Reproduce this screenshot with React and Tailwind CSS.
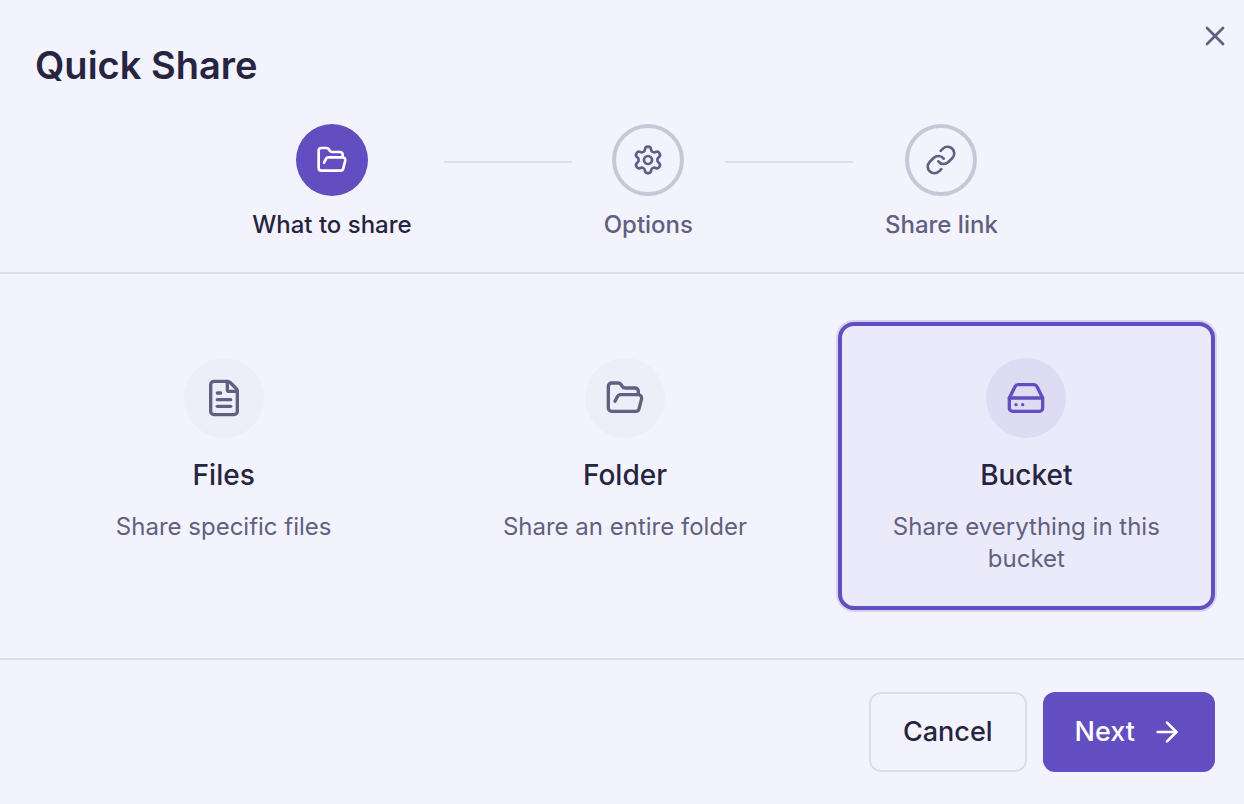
import { Fragment, useState } from "react";
import { ArrowRight, FileText, FolderOpen, HardDrive, Link, Settings, X } from "lucide-react";

const steps = [
  { label: "What to share", icon: FolderOpen },
  { label: "Options", icon: Settings },
  { label: "Share link", icon: Link },
];

const targets = [
  { id: "files", title: "Files", text: "Share specific files", icon: FileText },
  { id: "folder", title: "Folder", text: "Share an entire folder", icon: FolderOpen },
  { id: "bucket", title: "Bucket", text: "Share everything in this bucket", icon: HardDrive },
];

function Step({ label, icon: Icon, active }) {
  return (
    <li className="flex flex-col items-center gap-[13px]" aria-current={active ? "step" : undefined}>
      <div
        className={
          active
            ? "flex size-18 items-center justify-center rounded-full bg-[#634ec1] text-white"
            : "flex size-18 items-center justify-center rounded-full border-4 border-[#c8c7da] text-[#625f80]"
        }
      >
        <Icon className="size-8" />
      </div>
      <span className={active ? "text-2xl font-medium text-[#262440]" : "text-2xl font-medium text-[#625f80]"}>{label}</span>
    </li>
  );
}

function TargetCard({ title, text, icon: Icon, selected, onClick }) {
  return (
    <button
      type="button"
      aria-pressed={selected}
      onClick={onClick}
      className={
        selected
          ? "flex flex-col items-center rounded-2xl border-4 border-[#634ec1] bg-[#ebeafa] px-8 pt-8 pb-[31px] text-center ring-2 ring-[#d6d2f0]"
          : "flex flex-col items-center rounded-2xl border-4 border-transparent px-8 pt-8 pb-[31px] text-center"
      }
    >
      <span
        className={
          selected
            ? "flex size-20 items-center justify-center rounded-full bg-[#dedcf3] text-[#634ec1]"
            : "flex size-20 items-center justify-center rounded-full bg-[#eeeef8] text-[#625f80]"
        }
      >
        <Icon className="size-10" />
      </span>
      <span className="mt-4 text-[28px] leading-[42px] font-medium text-[#262440]">{title}</span>
      <span className="mt-[15px] text-2xl text-[#625f80]">{text}</span>
    </button>
  );
}

export default function App() {
  const [target, setTarget] = useState("bucket");

  return (
    <div className="flex min-h-screen flex-col bg-[#f3f3fd] font-['Inter',sans-serif] text-[#262440]">
      <header className="relative border-b-2 border-[#dddcec] pt-10 pr-[29px] pb-[31px] pl-[35px]">
        <h1 className="text-[38px] leading-[50px] font-semibold">Quick Share</h1>
        <button type="button" aria-label="Close" className="absolute top-5 right-[13px] text-[#625f80]">
          <X className="size-8" />
        </button>
        <ol className="mt-[34px] flex items-start justify-center gap-8">
          {steps.map((s, i) => (
            <Fragment key={s.label}>
              {i > 0 && <li aria-hidden="true" className="mt-[37px] h-[2px] w-32 bg-[#dddcec]" />}
              <Step {...s} active={i === 0} />
            </Fragment>
          ))}
        </ol>
      </header>

      <main className="grid flex-1 grid-cols-3 gap-6 py-12 pr-[29px] pl-[35px]">
        {targets.map((t) => (
          <TargetCard key={t.id} {...t} selected={t.id === target} onClick={() => setTarget(t.id)} />
        ))}
      </main>

      <footer className="flex justify-end gap-4 border-t-2 border-[#dddcec] pt-8 pr-[29px] pb-8 pl-[35px] text-[27px] leading-10 font-medium">
        <button type="button" className="h-20 rounded-xl border-2 border-[#dddcec] px-8">Cancel</button>
        <button type="button" className="flex h-20 items-center gap-4 rounded-xl bg-[#634ec1] px-8 text-white">
          Next
          <ArrowRight className="size-8" />
        </button>
      </footer>
    </div>
  );
}
